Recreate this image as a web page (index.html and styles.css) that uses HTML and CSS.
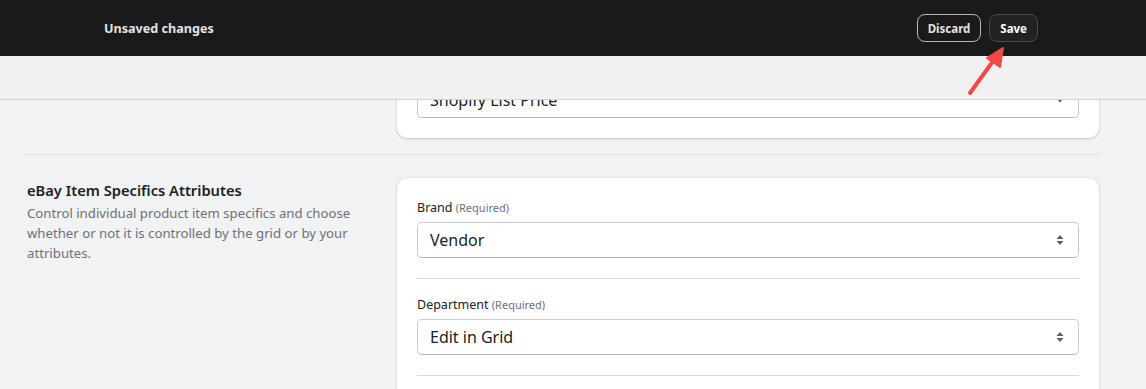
FILE: index.html
```html
<!DOCTYPE html>
<html lang="en">
<head>
  <meta charset="UTF-8">
  <meta name="viewport" content="width=device-width, initial-scale=1">
  <title>eBay Settings</title>
  <link rel="stylesheet" href="styles.css">
</head>
<body>
  <header class="cabecera">
    <div class="barra-guardar">
      <span class="aviso">Unsaved changes</span>
      <div class="acciones">
        <button class="btn btn-descartar">Discard</button>
        <button class="btn btn-guardar">Save</button>
      </div>
    </div>
    <div class="subbarra"></div>
  </header>

  <svg class="flecha" width="60" height="60" viewBox="0 0 60 60">
    <line x1="12" y1="52" x2="38" y2="16" stroke="#f44848" stroke-width="4" stroke-linecap="round"/>
    <polygon points="45,7 29,17 42,26" fill="#f44848" stroke="#f44848" stroke-width="2" stroke-linejoin="round"/>
  </svg>

  <main class="contenido">
    <section class="seccion seccion-primera">
      <div class="descripcion"></div>
      <div class="tarjeta">
        <div class="campo">
          <div class="selector">
            <span>Shopify List Price</span>
            <span class="flechas">
              <svg width="8" height="10" viewBox="0 0 8 10"><path d="M0.5 3.5 L7.5 3.5 L4 7.5 Z" fill="#5c5f62"/></svg>
            </span>
          </div>
        </div>
      </div>
    </section>

    <section class="seccion">
      <div class="descripcion">
        <h2>eBay Item Specifics Attributes</h2>
        <p>Control individual product item specifics and choose whether or not it is controlled by the grid or by your attributes.</p>
      </div>
      <div class="tarjeta tarjeta-larga">
        <div class="campo">
          <label>Brand <small>(Required)</small></label>
          <div class="selector">
            <span>Vendor</span>
            <span class="flechas">
              <svg width="8" height="12" viewBox="0 0 8 12"><path d="M0.5 5 L7.5 5 L4 1 Z M0.5 7 L7.5 7 L4 11 Z" fill="#5c5f62"/></svg>
            </span>
          </div>
        </div>
        <div class="campo">
          <label>Department <small>(Required)</small></label>
          <div class="selector">
            <span>Edit in Grid</span>
            <span class="flechas">
              <svg width="8" height="12" viewBox="0 0 8 12"><path d="M0.5 5 L7.5 5 L4 1 Z M0.5 7 L7.5 7 L4 11 Z" fill="#5c5f62"/></svg>
            </span>
          </div>
        </div>
      </div>
    </section>
  </main>
</body>
</html>
```

FILE: styles.css
```css
body {
  margin: 0;
  background: #f1f2f4;
  font-family: 'Noto Sans', 'Open Sans', sans-serif;
  color: #202223;
  height: 389px;
  overflow: hidden;
}

.cabecera {
  position: fixed;
  top: 0;
  left: 0;
  right: 0;
  z-index: 10;
}

.barra-guardar {
  height: 56px;
  background: #1a1a1a;
  display: flex;
  align-items: center;
  padding: 0 108px 0 104px;
}

.aviso {
  color: #e3e3e3;
  font-size: 12.6px;
  font-weight: 700;
}

.acciones {
  margin-left: auto;
  display: flex;
  gap: 8px;
}

.btn {
  height: 28px;
  padding: 0 10px;
  border-radius: 8px;
  font-family: inherit;
  font-size: 11.5px;
  font-weight: 700;
  cursor: pointer;
}

.btn-descartar {
  background: transparent;
  border: 1px solid #b8b8b8;
  color: #e3e3e3;
}

.btn-guardar {
  background: #222;
  border: 1px solid #4a4a4a;
  color: #fff;
}

.subbarra {
  height: 43px;
  background: #f1f1f1;
  border-bottom: 1px solid #d3d3d3;
}

.flecha {
  position: fixed;
  left: 958px;
  top: 41px;
  z-index: 20;
}

.contenido {
  padding: 0 47px 0 24px;
  margin-top: 39px;
}

.seccion {
  display: grid;
  grid-template-columns: 353px 702px;
  gap: 20px;
  padding: 23px 0 16px;
  border-top: 1px solid #e3e4e6;
}

.seccion-primera {
  border-top: none;
}

.descripcion h2 {
  margin: 0;
  font-size: 14.7px;
  font-weight: 600;
  line-height: 24px;
  padding-left: 3px;
}

.descripcion p {
  margin: 1px 0 0;
  font-size: 13.2px;
  line-height: 20px;
  color: #6d7175;
  padding-left: 3px;
}

.tarjeta {
  background: #fff;
  border-radius: 10px;
  box-shadow: 0 1px 3px rgba(0, 0, 0, 0.15), 0 0 0 1px rgba(63, 63, 68, 0.04);
  padding: 4px 20px 0;
}

.tarjeta-larga {
  padding-bottom: 40px;
}

.campo {
  padding: 16px 0 20px;
}

.tarjeta-larga .campo {
  border-bottom: 1px solid #d9dbdd;
}

.campo label {
  display: block;
  font-size: 12.5px;
  line-height: 20px;
  margin-bottom: 4px;
}

.campo label small {
  font-size: 11px;
  color: #6d7175;
}

.selector {
  height: 34px;
  border: 1px solid #c9cccf;
  border-bottom-color: #aeb4b9;
  border-radius: 5px;
  display: flex;
  align-items: center;
  padding: 0 14px 0 12px;
  font-size: 16px;
}

.flechas {
  margin-left: auto;
  display: flex;
}
```
